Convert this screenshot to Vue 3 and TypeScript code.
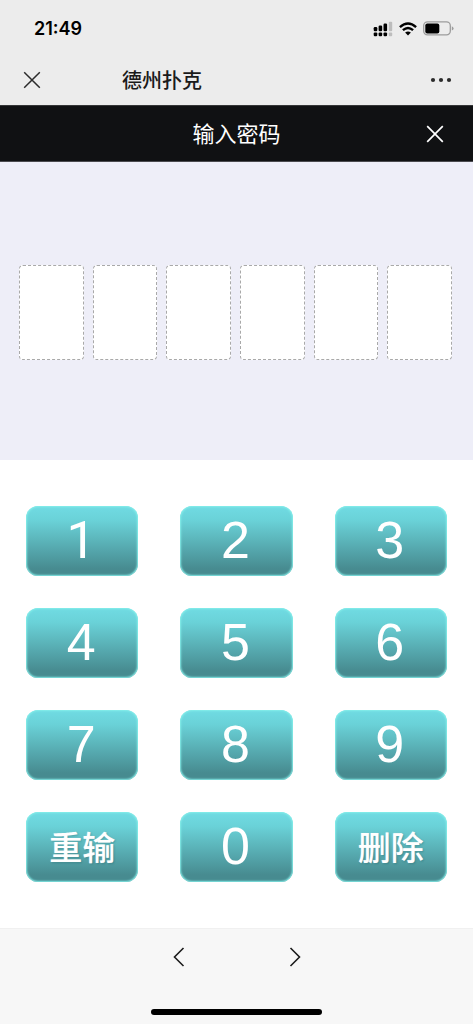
<script setup lang="ts">
import { ref } from 'vue'

const CODE_LENGTH = 6
const keys: string[] = ['1', '2', '3', '4', '5', '6', '7', '8', '9', '重输', '0', '删除']
const code = ref<string>('')

function press(key: string): void {
  if (key === '重输') {
    code.value = ''
  } else if (key === '删除') {
    code.value = code.value.slice(0, -1)
  } else if (code.value.length < CODE_LENGTH) {
    code.value += key
  }
}
</script>

<template>
  <div class="page">
    <header class="chrome">
      <div class="status">
        <time class="clock">21:49</time>
        <div class="indicators">
          <svg class="signal" width="20" height="16" viewBox="0 0 20 16" aria-hidden="true">
            <g fill="#000">
              <rect x="0.7" y="6" width="3.6" height="4.2" rx="1.2" />
              <rect x="5.6" y="4.6" width="3.6" height="5.6" rx="1.2" />
              <rect x="10.5" y="2.6" width="3.6" height="7.6" rx="1.2" />
              <rect x="0.7" y="11.4" width="3.6" height="3.9" rx="1.2" />
              <rect x="5.6" y="11.4" width="3.6" height="3.9" rx="1.2" />
              <rect x="10.5" y="11.4" width="3.6" height="3.9" rx="1.2" />
            </g>
            <g fill="#bdbdbd">
              <rect x="15.8" y="0.8" width="3.4" height="9.4" rx="1" />
              <rect x="15.8" y="11.4" width="3.4" height="3.9" rx="1" />
            </g>
          </svg>
          <svg class="wifi" width="18" height="14" viewBox="0 0 18 14" aria-hidden="true">
            <g fill="none" stroke="#000" stroke-width="2.4">
              <path d="M0.9 5.1 Q9 -2.1 17.1 5.1" />
              <path d="M3.9 8.2 Q9 3.7 14.1 8.2" />
            </g>
            <path d="M6.1 10.6 Q9 8.4 11.9 10.6 L9 13.6 Z" fill="#000" />
          </svg>
          <svg class="battery" width="31" height="15" viewBox="0 0 31 15" aria-hidden="true">
            <rect x="0.7" y="0.9" width="26.6" height="13" rx="3.8" fill="none" stroke="#9c9c9c" stroke-width="1.3" />
            <rect x="2.3" y="2.6" width="14" height="9.8" rx="2" fill="#000" />
            <path d="M28.8 5.2 Q30.6 5.9 30.6 7.4 Q30.6 8.9 28.8 9.6 Z" fill="#9c9c9c" />
          </svg>
        </div>
      </div>
      <nav class="titlebar">
        <button class="icon-button" type="button" aria-label="关闭网页">
          <svg width="18" height="18" viewBox="0 0 18 18" aria-hidden="true">
            <path d="M1.2 1.2 L16.8 16.8 M16.8 1.2 L1.2 16.8" stroke="#2b2b2b" stroke-width="1.5" fill="none" />
          </svg>
        </button>
        <h1 class="title">德州扑克</h1>
        <button class="icon-button" type="button" aria-label="更多">
          <svg width="22" height="6" viewBox="0 0 22 6" aria-hidden="true">
            <g fill="#2b2b2b">
              <circle cx="3" cy="3" r="2.1" />
              <circle cx="11" cy="3" r="2.1" />
              <circle cx="19" cy="3" r="2.1" />
            </g>
          </svg>
        </button>
      </nav>
    </header>

    <section class="dialog-bar">
      <h2 class="dialog-title">输入密码</h2>
      <button class="icon-button" type="button" aria-label="关闭">
        <svg width="18" height="18" viewBox="0 0 18 18" aria-hidden="true">
          <path d="M1.2 1.2 L16.8 16.8 M16.8 1.2 L1.2 16.8" stroke="#fff" stroke-width="1.7" fill="none" />
        </svg>
      </button>
    </section>

    <section class="code-area">
      <input
        v-for="n in CODE_LENGTH"
        :key="n"
        class="cell"
        type="password"
        readonly
        :aria-label="`密码第${n}位`"
        :value="code[n - 1] ?? ''"
      />
    </section>

    <main class="keypad">
      <button
        v-for="key in keys"
        :key="key"
        type="button"
        class="key"
        :class="{ word: key.length > 1, one: key === '1' }"
        @click="press(key)"
      >{{ key }}</button>
    </main>

    <footer class="toolbar">
      <div class="history">
        <button class="icon-button" type="button" aria-label="后退">
          <svg width="12" height="20" viewBox="0 0 12 20" aria-hidden="true">
            <path d="M10.5 1 L1.5 10 L10.5 19" stroke="#1c1c1c" stroke-width="1.6" fill="none" />
          </svg>
        </button>
        <button class="icon-button" type="button" aria-label="前进">
          <svg width="12" height="20" viewBox="0 0 12 20" aria-hidden="true">
            <path d="M1.5 1 L10.5 10 L1.5 19" stroke="#1c1c1c" stroke-width="1.6" fill="none" />
          </svg>
        </button>
      </div>
      <div class="home-indicator"></div>
    </footer>
  </div>
</template>

<style>
body {
  margin: 0;
}
</style>

<style scoped>
.page {
  display: flex;
  flex-direction: column;
  min-height: 100vh;
  background: #fff;
  font-family: "Liberation Sans", "Noto Sans CJK SC", sans-serif;
}

.page * {
  box-sizing: border-box;
}

.icon-button {
  display: flex;
  padding: 0;
  border: 0;
  background: none;
  cursor: pointer;
}

.icon-button svg {
  display: block;
}

.chrome {
  background: #ececec;
}

.status {
  display: flex;
  align-items: center;
  justify-content: space-between;
  height: 56px;
  padding: 1px 19px 0 34px;
}

.clock {
  font: 600 18px/24px Inter, sans-serif;
  color: #000;
}

.indicators {
  display: flex;
  align-items: center;
  gap: 6px;
}

.titlebar {
  display: flex;
  align-items: center;
  height: 49px;
  padding: 0 21px 1px 23px;
}

.title {
  flex: 1;
  margin: 0;
  padding: 2px 0 0 81px;
  font-size: 20px;
  font-weight: 500;
  line-height: 28px;
  color: #1a1a1a;
}

.dialog-bar {
  display: grid;
  grid-template-columns: 1fr auto 1fr;
  align-items: center;
  height: 57px;
  padding: 0 29px;
  border-top: 1px solid #353637;
  border-bottom: 1px solid #4b4b50;
  background: #101113;
}

.dialog-title {
  grid-column: 2;
  margin: 0;
  padding-top: 2px;
  font-size: 22px;
  font-weight: 400;
  line-height: 30px;
  color: #fff;
}

.dialog-bar .icon-button {
  justify-self: end;
}

.code-area {
  display: grid;
  grid-template-columns: repeat(6, 1fr);
  gap: 9px;
  padding: 103px 21px 100px 19px;
  background: #eeeef8;
}

.cell {
  width: 100%;
  min-width: 0;
  height: 95px;
  padding: 0;
  border: 1px dashed #a9a9a9;
  border-radius: 4px;
  outline: 0;
  background: #fff;
  font-size: 32px;
  text-align: center;
}

.keypad {
  display: grid;
  flex: 1;
  grid-template-columns: repeat(3, 1fr);
  grid-auto-rows: 70px;
  gap: 32px 42px;
  padding: 46px 26px;
}

.key {
  padding: 0 2px 1px 0;
  border: 0;
  border-radius: 12px;
  background: linear-gradient(#70dbe3 0%, #6ad2d8 20%, #478b90 90%);
  box-shadow: inset 0 0 2px 1px #86efea;
  font-family: inherit;
  font-size: 52px;
  line-height: 69px;
  color: #fff;
  cursor: pointer;
}

/* a "1" without a foot */
.key.one {
  font-family: Roboto, "Liberation Sans", sans-serif;
}

.key.word {
  padding: 3px 0 0;
  font-size: 33px;
  font-weight: 500;
  line-height: 66px;
  text-shadow: 0 0 1px rgba(255, 255, 255, 0.5), 1px 1px 2px rgba(0, 70, 75, 0.3);
}

.toolbar {
  display: flex;
  flex-direction: column;
  align-items: center;
  justify-content: space-between;
  height: 96px;
  padding: 18px 0 9px;
  border-top: 1px solid #f0f0f0;
  background: #f7f7f7;
}

.history {
  display: flex;
  gap: 104px;
}

.home-indicator {
  width: 36%;
  height: 6px;
  border-radius: 3px;
  background: #000;
}
</style>
